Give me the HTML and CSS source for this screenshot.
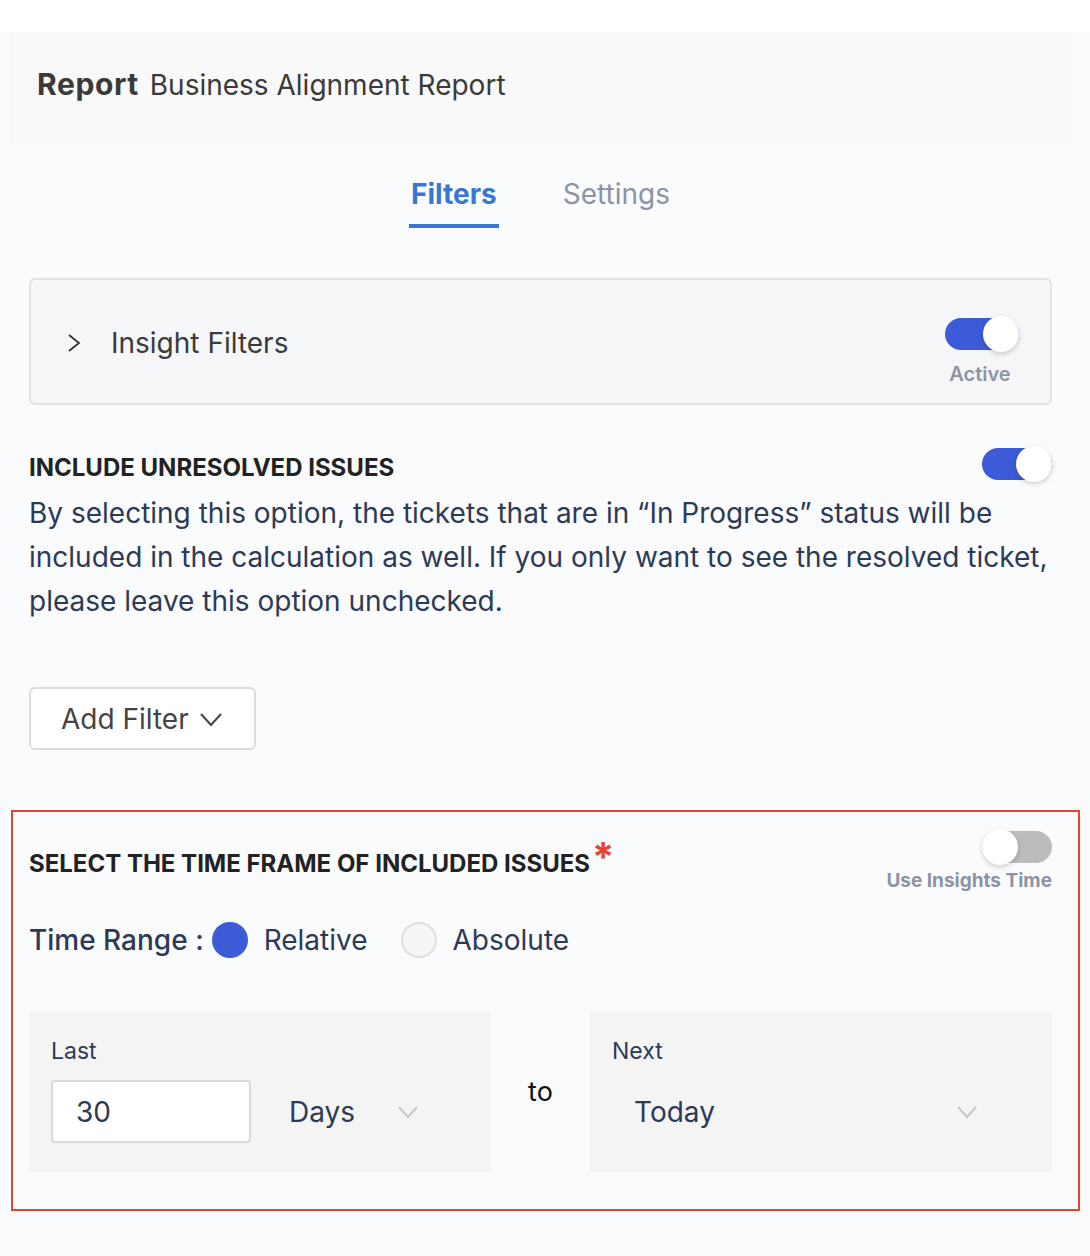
FILE: index.html
```html
<!DOCTYPE html>
<html lang="en">
<head>
<meta charset="utf-8">
<title>Business Alignment Report</title>
<link rel="stylesheet" href="styles.css">
</head>
<body>
<div class="top-strip"></div>
<header class="header">
  <h1 class="title"><span class="title-strong">Report</span> Business Alignment Report</h1>
</header>
<nav class="tabs">
  <a class="tab tab-active">Filters</a>
  <a class="tab">Settings</a>
</nav>
<main class="content">
  <section class="card">
    <div class="card-left">
      <svg class="chev-right" width="14" height="20" viewBox="0 0 14 20"><polyline points="2,2 12,10 2,18" fill="none" stroke="#333" stroke-width="1.8"/></svg>
      <span class="card-title">Insight Filters</span>
    </div>
    <div class="toggle-block">
      <span class="toggle toggle-on toggle-wide"><span class="knob"></span></span>
      <span class="toggle-label">Active</span>
    </div>
  </section>

  <section class="unresolved">
    <div class="section-head">
      <h2 class="section-title">INCLUDE UNRESOLVED ISSUES</h2>
      <span class="toggle toggle-on"><span class="knob"></span></span>
    </div>
    <p class="desc">By selecting this option, the tickets that are in “In Progress” status will be included in the calculation as well. If you only want to see the resolved ticket, please leave this option unchecked.</p>
  </section>

  <button class="add-filter">Add Filter
    <svg class="chev-down" width="24" height="16" viewBox="0 0 24 16"><polyline points="2,3 12,14 22,3" fill="none" stroke="#444" stroke-width="2"/></svg>
  </button>
</main>

<section class="timeframe">
  <div class="section-head tf-head">
    <h2 class="section-title">SELECT THE TIME FRAME OF INCLUDED ISSUES<span class="req">*</span></h2>
    <div class="toggle-block tf-toggle">
      <span class="toggle toggle-off"><span class="knob"></span></span>
      <span class="toggle-label">Use Insights Time</span>
    </div>
  </div>
  <div class="range-row">
    <span class="range-label">Time Range :</span>
    <span class="radio radio-on"></span><span class="radio-text">Relative</span>
    <span class="radio radio-off"></span><span class="radio-text">Absolute</span>
  </div>
  <div class="panels">
    <div class="panel">
      <span class="panel-label">Last</span>
      <div class="panel-row">
        <span class="num-input">30</span>
        <span class="select-text">Days</span>
        <svg class="chev-grey" width="22" height="14" viewBox="0 0 22 14"><polyline points="2,2 11,12 20,2" fill="none" stroke="#bcbcbc" stroke-width="1.6"/></svg>
      </div>
    </div>
    <div class="to">to</div>
    <div class="panel">
      <span class="panel-label">Next</span>
      <div class="panel-row panel-row-next">
        <span class="select-text">Today</span>
        <svg class="chev-grey" width="22" height="14" viewBox="0 0 22 14"><polyline points="2,2 11,12 20,2" fill="none" stroke="#bcbcbc" stroke-width="1.6"/></svg>
      </div>
    </div>
  </div>
</section>
</body>
</html>
```

FILE: styles.css
```css
* { box-sizing: border-box; }
html, body { margin: 0; padding: 0; }
body {
  background: #fafbfd;
  font-family: Inter, "Noto Sans", sans-serif;
  width: 1090px;
  min-height: 1256px;
}
.top-strip { height: 32px; background: #ffffff; }
.header {
  margin-left: 9px;
  width: 1063px;
  height: 112px;
  background: #f9f9f9;
  display: flex;
  align-items: center;
  padding-left: 28px;
  padding-bottom: 9px;
}
.title {
  margin: 0;
  font-size: 28px;
  font-weight: 400;
  color: #3a3a3a;
}
.title-strong { font-size: 30px; font-weight: 700; letter-spacing: 0.6px; margin-right: 3px; }

.tabs {
  display: flex;
  justify-content: center;
  gap: 62px;
  padding: 0 38px 0 29px;
  margin-top: 30px;
  height: 54px;
}
.tab {
  font-size: 28px;
  color: #8c94a3;
  padding: 0 2px;
  height: 54px;
  line-height: 40px;
}
.tab-active {
  color: #3977d2;
  font-weight: 700;
  border-bottom: 4px solid #3977d2;
}

.content { padding: 50px 38px 0 29px; }

.card {
  height: 127px;
  border: 2px solid #e1e2e6;
  border-radius: 6px;
  background: #f5f6f8;
  display: flex;
  align-items: flex-start;
  justify-content: space-between;
  padding: 0 31px 0 36px;
}
.card-left {
  display: flex;
  align-items: center;
  gap: 30px;
  height: 125px;
}
.chev-right { display: block; }
.card-title { font-size: 28px; color: #3a3a3a; }

.toggle-block {
  display: flex;
  flex-direction: column;
  align-items: center;
  padding-top: 38px;
}
.toggle {
  position: relative;
  display: block;
  width: 70px;
  height: 32px;
  border-radius: 16px;
}
.toggle-wide { width: 74px; }
.toggle-on { background: #3d5bd6; }
.toggle-off { background: #bbbcbe; }
.knob {
  position: absolute;
  top: -2px;
  width: 36px;
  height: 36px;
  border-radius: 50%;
  background: #ffffff;
  box-shadow: 0 2px 5px rgba(0,0,0,0.18);
}
.toggle-on .knob { right: 0; }
.toggle-off .knob { left: 0; }
.toggle-label {
  margin-top: 12px;
  font-size: 20px;
  font-weight: 600;
  color: #8c94a3;
  line-height: 24px;
  margin-right: 4px;
}

.unresolved { margin-top: 44px; }
.section-head {
  display: flex;
  justify-content: space-between;
  align-items: flex-start;
}
.unresolved .section-title { padding-top: 4px; padding-bottom: 2px; }
.unresolved .toggle { margin-top: -1px; }
.section-title {
  margin: 0;
  font-size: 24px;
  font-weight: 700;
  color: #222222;
}
.desc {
  margin: 7px 0 0;
  font-size: 28px;
  line-height: 44px;
  color: #2d3a56;
}

.add-filter {
  margin-top: 64px;
  width: 227px;
  height: 63px;
  border: 2px solid #dcdcdc;
  border-radius: 6px;
  background: #ffffff;
  font-family: inherit;
  font-size: 28px;
  color: #444444;
  display: flex;
  align-items: center;
  padding: 0 0 0 30px;
  gap: 10px;
}

.timeframe {
  margin: 60px 10px 0 11px;
  border: 2px solid #e8432f;
  padding: 19px 26px 37px 16px;
}
.tf-head .section-title { padding-top: 7px; }
.req {
  color: #e8432f;
  font-size: 40px;
  line-height: 1;
  position: relative;
  top: -1px;
  margin-left: 2px;
}
.tf-toggle { padding-top: 0; align-items: flex-end; }
.tf-toggle .toggle-label { margin-top: 6px; font-size: 19px; font-weight: 700; margin-right: 0; }

.range-row {
  display: flex;
  align-items: center;
  margin-top: 27px;
  height: 40px;
}
.range-label { font-size: 28px; font-weight: 500; color: #2d3a56; margin-right: 8px; }
.radio {
  width: 36px;
  height: 36px;
  border-radius: 50%;
  margin-right: 16px;
}
.radio-on { background: #3d5bd6; }
.radio-off { background: #f5f5f5; border: 2px solid #dedede; }
.radio-text { font-size: 28px; color: #2d3a56; margin-right: 33px; }

.panels {
  display: grid;
  grid-template-columns: 1fr 99px 1fr;
  margin-top: 51px;
}
.panel {
  background: #f4f4f4;
  height: 161px;
  padding: 24px 22px 0;
}
.panel-label { display: block; font-size: 23px; color: #2d3a56; line-height: 32px; }
.panel-row {
  display: flex;
  align-items: center;
  margin-top: 13px;
  height: 63px;
}
.num-input {
  width: 200px;
  height: 63px;
  background: #ffffff;
  border: 2px solid #d9d9d9;
  border-radius: 4px;
  font-size: 28px;
  color: #2d3a56;
  display: flex;
  align-items: center;
  padding-left: 23px;
  margin-right: 38px;
}
.select-text { font-size: 28px; color: #2d3a56; margin-right: 42px; }
.panel-row-next { padding-left: 22px; }
.panel-row-next .select-text { margin-right: auto; }
.panel-row-next .chev-grey { margin-right: 52px; }
.to {
  font-size: 27px;
  color: #111111;
  display: flex;
  justify-content: center;
  padding-top: 64px;
}
```
